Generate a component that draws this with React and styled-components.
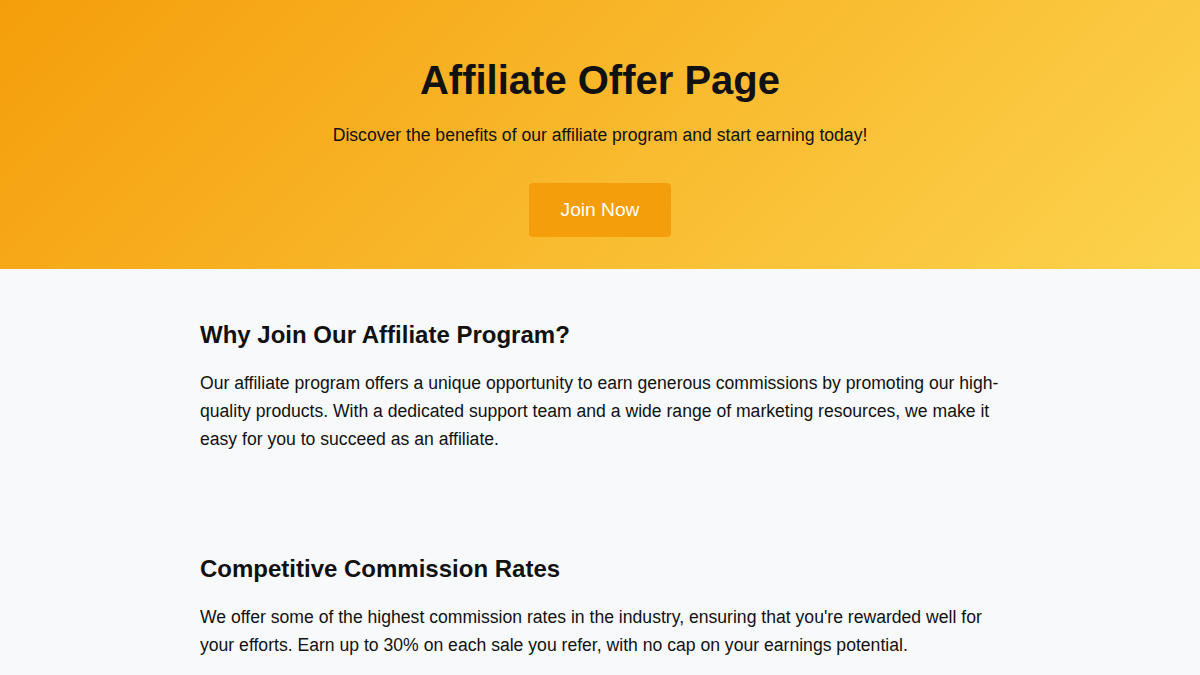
import React from "react";
import styled, { createGlobalStyle } from "styled-components";

const GlobalStyle = createGlobalStyle`
  body {
    margin: 0;
    background: #f8f9fb;
    font-family: "Liberation Sans", Arial, sans-serif;
    color: #111111;
  }
`;

const Hero = styled.header`
  background: linear-gradient(135deg, #f59e0b 0%, #fcd34d 100%);
  padding: 57px 20px 32px;
  text-align: center;
  display: flex;
  flex-direction: column;
  align-items: center;
`;

const Title = styled.h1`
  margin: 0 0 22px;
  font-size: 40px;
  line-height: 46px;
  font-weight: 700;
  color: #111111;
`;

const Lead = styled.p`
  margin: 0;
  font-size: 17.6px;
  line-height: 21px;
  color: #111111;
`;

const JoinButton = styled.button`
  margin-top: 37px;
  height: 54px;
  padding: 0 32px;
  border: none;
  border-radius: 4px;
  background: #f59e0b;
  color: #ffffff;
  font-family: inherit;
  font-size: 19.2px;
  cursor: pointer;
`;

const Main = styled.main`
  max-width: 800px;
  margin: 0 auto;
`;

const Section = styled.section`
  padding: 52px 0 50px;
`;

const Heading = styled.h2`
  margin: 0 0 20px;
  font-size: 24px;
  line-height: 28px;
  font-weight: 700;
  color: #111111;
`;

const Text = styled.p`
  margin: 0;
  font-size: 17.6px;
  line-height: 28px;
  color: #111111;
`;

const sections = [
  {
    title: "Why Join Our Affiliate Program?",
    body: "Our affiliate program offers a unique opportunity to earn generous commissions by promoting our high-quality products. With a dedicated support team and a wide range of marketing resources, we make it easy for you to succeed as an affiliate.",
  },
  {
    title: "Competitive Commission Rates",
    body: "We offer some of the highest commission rates in the industry, ensuring that you're rewarded well for your efforts. Earn up to 30% on each sale you refer, with no cap on your earnings potential.",
  },
];

export default function App() {
  return (
    <>
      <GlobalStyle />
      <Hero>
        <Title>Affiliate Offer Page</Title>
        <Lead>Discover the benefits of our affiliate program and start earning today!</Lead>
        <JoinButton>Join Now</JoinButton>
      </Hero>
      <Main>
        {sections.map((s) => (
          <Section key={s.title}>
            <Heading>{s.title}</Heading>
            <Text>{s.body}</Text>
          </Section>
        ))}
      </Main>
    </>
  );
}
